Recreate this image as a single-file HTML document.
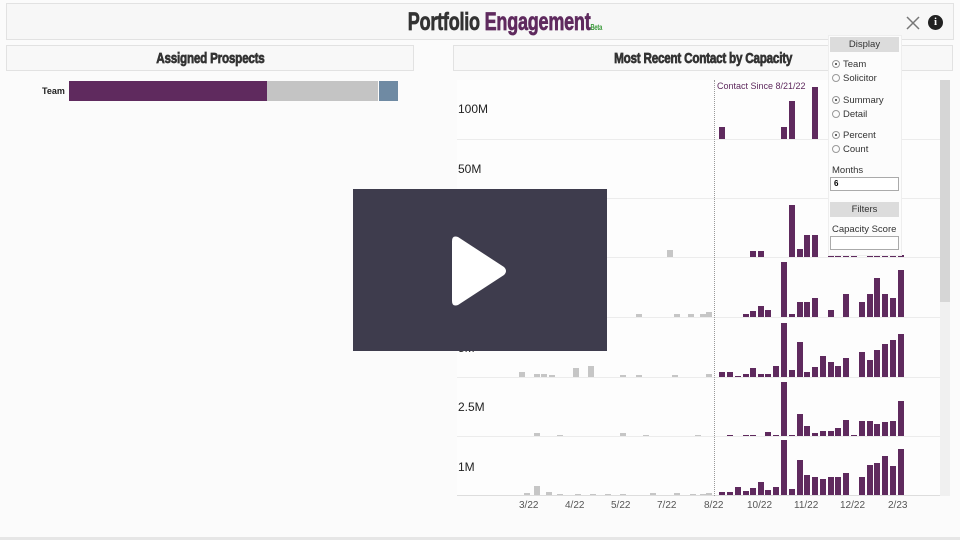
<!DOCTYPE html>
<html><head><meta charset="utf-8"><style>
*{margin:0;padding:0;box-sizing:border-box}
body{width:960px;height:540px;background:#fbfbfb;position:relative;overflow:hidden;font-family:"Liberation Sans",sans-serif}
.a{position:absolute}
.hdr{border:1px solid #e2e2e2;background:#f8f8f8}
.cond{display:inline-block;font-weight:bold;transform:scaleX(0.78);transform-origin:center;white-space:nowrap;letter-spacing:-0.3px;-webkit-text-stroke:0.7px currentColor}
.b{position:absolute;width:6px;background:#5f2a5e}
.g{position:absolute;width:6px;background:#c6c6c6}
.lbl{position:absolute;font-size:12px;color:#222}
.grid{position:absolute;left:457px;width:483px;height:1px;background:#ececec}
.ax{position:absolute;top:500px;font-size:10px;color:#555}
.rad{font-size:9.5px;color:#333;position:absolute;left:832px}
.rad span{display:inline-block;width:8px;height:8px;border:1px solid #999;border-radius:50%;margin-right:3px;vertical-align:-1px;position:relative}
.rad span.on::after{content:"";position:absolute;left:2px;top:2px;width:2px;height:2px;border-radius:50%;background:#333}
</style></head><body>
<div class="a hdr" style="left:6px;top:3px;width:948px;height:37px;background:#f7f7f7"></div>
<div class="a" style="left:370px;top:8px;width:240px;text-align:center;font-size:25px;line-height:28px">
<span class="cond" style="transform:scaleX(0.72);color:#333"><span style="color:#333">Portfolio</span> <span style="color:#5f2a5e">Engagement</span><span style="color:#3a9a3a;font-size:8px;-webkit-text-stroke:0">Beta</span></span></div>
<svg class="a" style="left:906px;top:16px" width="14" height="14"><path d="M1 1L13 13M13 1L1 13" stroke="#777" stroke-width="1.5"/></svg>
<div class="a" style="left:928px;top:15px;width:15px;height:15px;border-radius:50%;background:#222;color:#fff;font:bold 11px/15px 'Liberation Serif',serif;text-align:center">i</div>

<div class="a hdr" style="left:6px;top:45px;width:408px;height:26px;text-align:center;font-size:15px;line-height:25px"><span class="cond" style="color:#333">Assigned Prospects</span></div>
<div class="a hdr" style="left:453px;top:45px;width:500px;height:26px;text-align:center;font-size:15px;line-height:25px"><span class="cond" style="color:#333">Most Recent Contact by Capacity</span></div>
<div class="a" style="left:42px;top:86px;font-size:9px;font-weight:bold;color:#222">Team</div>
<div class="a" style="left:69px;top:81px;width:198px;height:20px;background:#5f2a5e"></div>
<div class="a" style="left:267px;top:81px;width:111px;height:20px;background:#c4c4c4"></div>
<div class="a" style="left:379px;top:81px;width:19px;height:20px;background:#6f8aa3"></div>

<div class="a" style="left:457px;top:80px;width:483px;height:416px;background:#fdfdfd"></div>
<div class="grid" style="top:139px"></div><div class="grid" style="top:198px"></div><div class="grid" style="top:257px"></div><div class="grid" style="top:317px"></div><div class="grid" style="top:377px"></div><div class="grid" style="top:436px"></div><div class="grid" style="top:495px;background:#ddd"></div>
<div class="lbl" style="left:458px;top:102px">100M</div>
<div class="lbl" style="left:458px;top:162px">50M</div>
<div class="lbl" style="left:458px;top:221px">25M</div>
<div class="lbl" style="left:458px;top:341px">5M</div>
<div class="lbl" style="left:458px;top:400px">2.5M</div>
<div class="lbl" style="left:458px;top:460px">1M</div>
<div class="a" style="left:714px;top:80px;width:0;height:416px;border-left:1px dotted #999"></div>
<div class="a" style="left:717px;top:81px;font-size:9px;color:#5f2a5e">Contact Since 8/21/22</div>
<div id="bars"></div>
<div class="a" style="left:940px;top:80px;width:10px;height:416px;background:#f0f0f0"></div>
<div class="a" style="left:940px;top:80px;width:10px;height:222px;background:#d6d6d6"></div>
<div class="ax" style="left:519px">3/22</div><div class="ax" style="left:565px">4/22</div><div class="ax" style="left:611px">5/22</div><div class="ax" style="left:657px">7/22</div><div class="ax" style="left:704px">8/22</div><div class="ax" style="left:747px">10/22</div><div class="ax" style="left:794px">11/22</div><div class="ax" style="left:840px">12/22</div><div class="ax" style="left:888px">2/23</div>

<div class="a" style="left:828px;top:35px;width:74px;height:221px;background:#fcfcfc;border:1px solid #eee"></div>
<div class="a" style="left:830px;top:37px;width:69px;height:15px;background:#dcdcdc;font-size:9.5px;text-align:center;line-height:15px;color:#333">Display</div>
<div class="rad" style="top:59px"><span class="on"></span>Team</div>
<div class="rad" style="top:73px"><span></span>Solicitor</div>
<div class="rad" style="top:95px"><span class="on"></span>Summary</div>
<div class="rad" style="top:109px"><span></span>Detail</div>
<div class="rad" style="top:130px"><span class="on"></span>Percent</div>
<div class="rad" style="top:144px"><span></span>Count</div>
<div class="a" style="left:832px;top:165px;font-size:9.5px;color:#333">Months</div>
<div class="a" style="left:830px;top:177px;width:69px;height:14px;border:1px solid #aaa;background:#fff;font-size:8px;font-weight:bold;padding-left:3px;line-height:12px">6</div>
<div class="a" style="left:830px;top:202px;width:69px;height:15px;background:#dcdcdc;font-size:9.5px;text-align:center;line-height:15px;color:#333">Filters</div>
<div class="a" style="left:832px;top:224px;font-size:9.5px;color:#333">Capacity Score</div>
<div class="a" style="left:830px;top:236px;width:69px;height:14px;border:1px solid #aaa;background:#fff"></div>

<div class="a" style="left:353px;top:189px;width:254px;height:162px;background:#3e3c4d"></div>
<svg class="a" style="left:450px;top:233px" width="60" height="76"><path d="M8 4 L54 34 Q58 38 54 42 L8 72 Q2 74 2 68 L2 8 Q2 2 8 4Z" fill="#fff"/></svg>
<div class="a" style="left:0;top:537px;width:960px;height:3px;background:#e6e6e6"></div>
<script>
var xs=[719,727,735,743,750,758,765,773,781,789,797,804,812,820,828,835,843,851,859,867,874,882,890,898];
var rows=[
[139,{0:12,8:12,9:38,12:52}],
[257,{4:6,5:6,9:52,10:8,11:22,12:22,14:10,15:2,16:2,17:2,19:2,20:2,21:2,22:2,23:2}],
[317,{3:3,4:6,5:11,6:7,8:55,9:3,10:15,11:15,12:19,14:7,16:23,18:15,19:23,20:39,21:23,22:19,23:47}],
[377,{0:5,1:5,2:1,3:3,4:9,5:3,6:3,7:11,8:54,9:7,10:35,11:5,12:10,13:21,14:15,15:11,16:19,18:25,19:17,20:27,21:33,22:37,23:43}],
[436,{1:1,3:1,4:1,6:4,7:1,8:54,9:1,10:22,11:10,12:3,13:5,14:5,15:8,16:16,17:1,18:15,19:15,20:12,21:14,22:15,23:35}],
[495,{0:3,1:3,2:8,3:4,4:7,5:13,6:5,7:8,8:55,9:6,10:35,11:20,12:18,13:16,14:18,15:18,16:22,18:18,19:30,20:32,21:39,22:29,23:46}]];
var gr=[[257,{533:4,667:7}],[317,{520:2,533:6,550:3,636:3,674:3,688:3,700:3,706:5}],[377,{519:5,534:3,541:3,549:2,573:9,588:11,620:2,636:2,672:2,706:3}],[436,{534:3,557:1,620:3,643:1,695:1}],[495,{524:2,534:9,546:3,557:1,575:1,590:1,605:1,620:1,650:2,674:2,690:1,700:1,706:2}]];
var h='';
rows.forEach(function(r){for(var k in r[1]){var v=r[1][k];h+='<div class="b" style="left:'+xs[k]+'px;top:'+(r[0]-v)+'px;height:'+v+'px"></div>';}});
gr.forEach(function(r){for(var k in r[1]){var v=r[1][k];h+='<div class="g" style="left:'+k+'px;top:'+(r[0]-v)+'px;height:'+v+'px"></div>';}});
document.getElementById('bars').innerHTML=h;
</script>
</body></html>
